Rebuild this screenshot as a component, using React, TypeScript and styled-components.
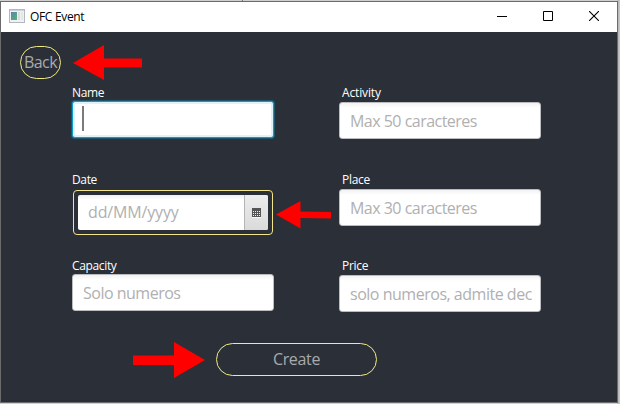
import React from "react";
import styled, { createGlobalStyle, css } from "styled-components";

const GlobalStyle = createGlobalStyle`
  * { box-sizing: border-box; }
  html, body { margin: 0; padding: 0; background: #c4c4c4; overflow: hidden; }
  body { font-family: "Open Sans", "Noto Sans", sans-serif; }
`;

const Desktop = styled.div`
  width: 620px;
  height: 404px;
  padding-top: 1px;
  background:
    linear-gradient(#777, #777) 242px 0 / 1px 1px no-repeat,
    linear-gradient(90deg, #d0d0d0 0 617px, #b4b4b4 618px, #cccccc 620px);
`;

const Window = styled.main`
  width: 618px;
  height: 402px;
  border: 1px solid #6b6b6b;
  background: #2b2f38;
`;

const TitleBar = styled.header`
  display: flex;
  align-items: center;
  height: 30px;
  padding: 0 18px 2px 8px;
  background: #fff;
`;

const Title = styled.h1`
  flex: 1;
  margin: 1px 0 0 5px;
  font-size: 12px;
  font-weight: 400;
  line-height: 18px;
  letter-spacing: -0.33px;
  color: #000;
`;

const WindowControls = styled.div`
  display: flex;
  gap: 36px;
  height: 10px;
`;

const Content = styled.form`
  height: 370px;
`;

const TopRow = styled.div`
  display: flex;
  align-items: flex-start;
  gap: 12px;
  height: 51px;
  padding: 13px 0 0 19px;
`;

const OutlineButton = styled.button<{ $width: number; $spacing: number }>`
  display: flex;
  align-items: center;
  justify-content: center;
  width: ${(p) => p.$width}px;
  height: 33px;
  padding: 0 0 1px;
  border: 1px solid #f0ec7d;
  border-radius: 17px;
  background: transparent;
  color: #a9aaac;
  font: 16px "Open Sans", "Noto Sans", sans-serif;
  letter-spacing: ${(p) => p.$spacing}px;
  white-space: nowrap;
`;

const BackButton = styled(OutlineButton)`
  margin-top: 1px;
`;

const Fields = styled.div`
  display: grid;
  grid-template-columns: 202px 202px;
  grid-template-rows: 87px 86px 87px;
  column-gap: 65px;
  padding-left: 71px;
`;

const Field = styled.div`
  position: relative;
  display: flex;
  flex-direction: column;
`;

const Label = styled.label<{ $height: number; $indent?: number; $spacing: number }>`
  height: ${(p) => p.$height}px;
  padding-left: ${(p) => p.$indent ?? 0}px;
  color: #fff;
  font-size: 12px;
  line-height: 20px;
  letter-spacing: ${(p) => p.$spacing}px;
`;

const TextBox = styled.div<{ $focused?: boolean; $spacing?: number }>`
  display: flex;
  align-items: center;
  height: 37px;
  padding: 0 8px 0 10px;
  border: 1px solid #bcbcbe;
  border-radius: 3px;
  background: linear-gradient(#f2f2f2, #fff 5px);
  color: #b0b0b0;
  font-size: 16px;
  letter-spacing: ${(p) => p.$spacing ?? 0}px;
  white-space: nowrap;
  ${(p) =>
    p.$focused &&
    css`
      border-color: #0a9bcb;
      background: #fff;
      box-shadow: 0 0 1px 1px rgba(3, 158, 211, 0.4), inset 0 0 0 2px #def2f9;
    `}
`;

const Placeholder = styled.span`
  flex: 1;
  overflow: hidden;
  line-height: 24px;
`;

const Caret = styled.span`
  width: 2px;
  height: 25px;
  margin: 0 0 2px -1px;
  background: #7b7b7b;
`;

const DateFrame = styled.div`
  width: 200px;
  height: 45px;
  margin-left: 1px;
  padding: 4px;
  border: 1px solid #f3e58c;
  border-radius: 4px;
`;

const DateBox = styled.div`
  display: flex;
  height: 35px;
  border-radius: 2px;
  overflow: hidden;
  background: linear-gradient(#f0f0f0, #fff 5px);
  color: #b0b0b0;
  font-size: 16px;
  letter-spacing: -0.15px;
  line-height: 35px;
`;

const DateText = styled.span`
  flex: 1;
  padding-left: 10px;
`;

const CalendarButton = styled.span`
  display: flex;
  align-items: center;
  justify-content: center;
  width: 24px;
  border-left: 1px solid #b5b5b5;
  background: linear-gradient(#ededed, #dadada);
`;

const DateArrow = styled.div`
  position: absolute;
  left: 204px;
  top: 30px;
  display: flex;
`;

const SubmitRow = styled.div`
  display: flex;
  gap: 11px;
  height: 38px;
  margin-top: -2px;
  padding-left: 132px;
`;

const CreateButton = styled(OutlineButton)`
  margin-top: 2px;
`;

const Arrow = ({ width, height, points }: { width: number; height: number; points: string }) => (
  <svg width={width} height={height} viewBox={`0 0 ${width} ${height}`} aria-hidden>
    <polygon points={points} fill="#ff0000" />
  </svg>
);

const AppIcon = () => (
  <svg width="16" height="14" viewBox="0 0 16 14" aria-hidden>
    <defs>
      <linearGradient id="pane" x2="1" y2="1">
        <stop stopColor="#5a86b0" />
        <stop offset="1" stopColor="#54b276" />
      </linearGradient>
    </defs>
    <rect x=".5" y=".5" width="15" height="13" fill="#f1f1f3" stroke="#b4b7bf" />
    <path d="M1 1.5h14" stroke="#ccd0d9" />
    <rect x="2" y="3" width="6" height="8" fill="url(#pane)" />
    <rect x="9" y="3" width="2" height="8" fill="#dcdcdc" />
    <rect x="12" y="3" width="2" height="8" fill="#e2e8e4" />
  </svg>
);

const CalendarIcon = () => (
  <svg width="9" height="10" viewBox="0 0 9 10" shapeRendering="crispEdges" aria-hidden>
    <path d="M0 0h9v9H0z" fill="#555" />
    <path d="M0 9h9v1H0z" fill="#f8f8f8" />
    {[3, 5, 7].map((y) => (
      <path key={y} d={`M1 ${y}.5h7`} stroke="#eee" strokeDasharray="1 1" />
    ))}
  </svg>
);

export default function App() {
  return (
    <>
      <GlobalStyle />
      <Desktop>
        <Window>
          <TitleBar>
            <AppIcon />
            <Title>OFC Event</Title>
            <WindowControls>
              <svg width="10" height="10" shapeRendering="crispEdges"><path d="M0 5.5h10" stroke="#000" /></svg>
              <svg width="10" height="10"><path d="M.5.5h9v9h-9z" fill="none" stroke="#000" /></svg>
              <svg width="10" height="10"><path d="M0 0l10 10M10 0L0 10" stroke="#000" strokeWidth="1.1" /></svg>
            </WindowControls>
          </TitleBar>
          <Content>
            <TopRow>
              <BackButton type="button" $width={41} $spacing={-0.55}>Back</BackButton>
              <Arrow width={69} height={35} points="0,18 31,0 31,13.5 69,13.5 69,22.5 31,22.5 31,35" />
            </TopRow>
            <Fields>
              <Field>
                <Label $height={18} $spacing={-0.35}>Name</Label>
                <TextBox $focused><Caret /></TextBox>
              </Field>
              <Field>
                <Label $height={19} $indent={3} $spacing={-0.15}>Activity</Label>
                <TextBox $spacing={-0.52}><Placeholder>Max 50 caracteres</Placeholder></TextBox>
              </Field>
              <Field>
                <Label $height={20} $spacing={-0.35}>Date</Label>
                <DateFrame>
                  <DateBox>
                    <DateText>dd/MM/yyyy</DateText>
                    <CalendarButton><CalendarIcon /></CalendarButton>
                  </DateBox>
                </DateFrame>
                <DateArrow>
                  <Arrow width={55} height={29} points="0,14.5 24.5,1 24.5,11.5 55,12 55,18.5 24.5,18 24.5,28.5" />
                </DateArrow>
              </Field>
              <Field>
                <Label $height={19} $indent={3} $spacing={-0.3}>Place</Label>
                <TextBox $spacing={-0.52}><Placeholder>Max 30 caracteres</Placeholder></TextBox>
              </Field>
              <Field>
                <Label $height={18} $spacing={-0.35}>Capacity</Label>
                <TextBox $spacing={-0.5}><Placeholder>Solo numeros</Placeholder></TextBox>
              </Field>
              <Field>
                <Label $height={19} $indent={3} $spacing={-0.3}>Price</Label>
                <TextBox $spacing={-0.48}><Placeholder>solo numeros, admite dec</Placeholder></TextBox>
              </Field>
            </Fields>
            <SubmitRow>
              <Arrow width={72} height={37} points="0,14.5 41,14.5 41,1 72,19 41,37 41,24 0,24" />
              <CreateButton type="button" $width={161} $spacing={-0.35}>Create</CreateButton>
            </SubmitRow>
          </Content>
        </Window>
      </Desktop>
    </>
  );
}
